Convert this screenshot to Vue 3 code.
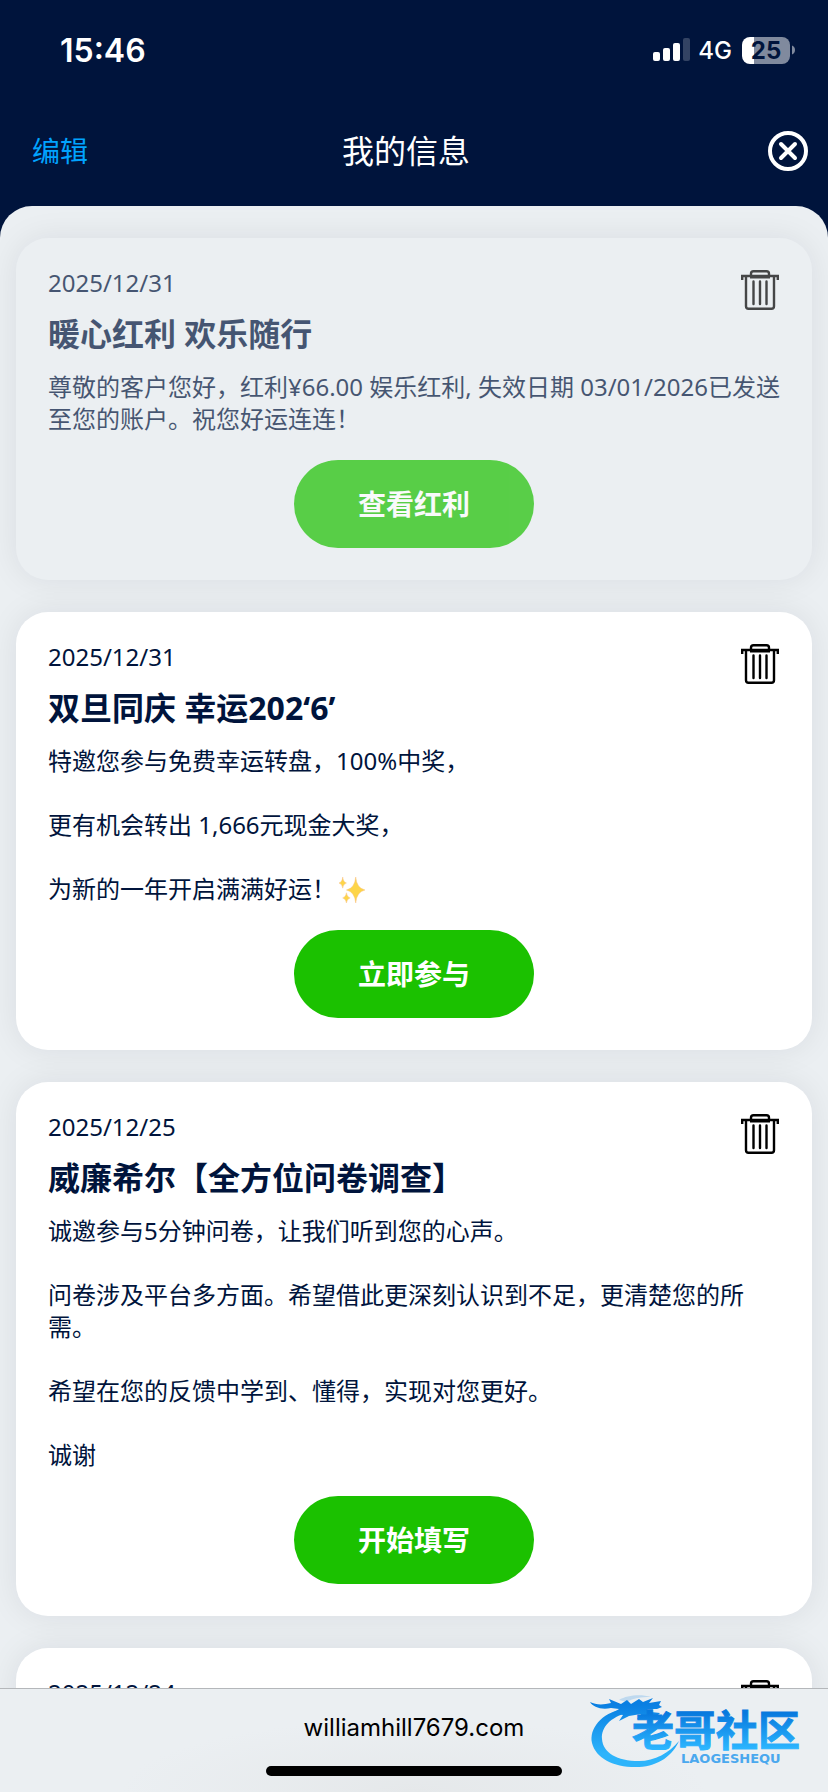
<script setup>
import { ref } from 'vue'

const messages = ref([
  {
    id: 1,
    date: '2025/12/31',
    title: '暖心红利 欢乐随行',
    body: '尊敬的客户您好，红利¥66.00 娱乐红利, 失效日期 03/01/2026已发送至您的账户。祝您好运连连！',
    action: '查看红利',
    read: true,
  },
  {
    id: 2,
    date: '2025/12/31',
    title: '双旦同庆 幸运202‘6’',
    body: '特邀您参与免费幸运转盘，100%中奖，\n\n更有机会转出 1,666元现金大奖，\n\n为新的一年开启满满好运！',
    sparkle: true,
    action: '立即参与',
  },
  {
    id: 3,
    date: '2025/12/25',
    title: '威廉希尔【全方位问卷调查】',
    body: '诚邀参与5分钟问卷，让我们听到您的心声。\n\n问卷涉及平台多方面。希望借此更深刻认识到不足，更清楚您的所需。\n\n希望在您的反馈中学到、懂得，实现对您更好。\n\n诚谢',
    action: '开始填写',
  },
  { id: 4, date: '2025/12/24' },
])

function remove(id) {
  messages.value = messages.value.filter((m) => m.id !== id)
}
</script>

<template>
  <div class="screen">
    <header class="top">
      <div class="status">
        <span class="time">15:46</span>
        <div class="indicators">
          <svg class="signal" viewBox="0 0 37 24" aria-hidden="true">
            <rect x="0" y="14" width="7" height="9" rx="2" />
            <rect x="10" y="10" width="7" height="13" rx="2" />
            <rect x="20" y="5" width="7" height="18" rx="2" />
            <rect x="30" y="0" width="7" height="23" rx="2" opacity="0.2" />
          </svg>
          <span class="network">4G</span>
          <div class="battery"><span class="level">25</span></div>
          <svg class="tip" viewBox="0 0 3 10" aria-hidden="true"><path d="M0 0.5C4 2 4 8 0 9.5z" /></svg>
        </div>
      </div>
      <nav class="nav">
        <button type="button" class="edit">编辑</button>
        <h1>我的信息</h1>
        <button type="button" class="close" aria-label="关闭">
          <svg viewBox="0 0 40 40" fill="none" stroke="#fff" stroke-width="4" stroke-linecap="round">
            <circle cx="20" cy="20" r="18" />
            <path d="M13 13L27 27M27 13L13 27" />
          </svg>
        </button>
      </nav>
    </header>

    <main class="list">
      <article v-for="m in messages" :key="m.id" class="card" :class="{ read: m.read }">
        <div class="inner">
          <div class="head">
            <div>
              <time class="date">{{ m.date }}</time>
              <h2 v-if="m.title">{{ m.title }}</h2>
            </div>
            <button type="button" class="trash" aria-label="删除" @click="remove(m.id)">
              <svg viewBox="0 0 40 40" fill="none" stroke="#000" stroke-width="2.4">
                <path d="M11 6V3.700Q11 1.200 13.500 1.200H26.500Q29 1.200 29 3.700V6" />
                <path d="M2.200 10V6H37.800V10" />
                <path d="M6 6V36.300Q6 38.800 8.500 38.800H31.500Q34 38.800 34 36.300V6M10 7.200H30" />
                <path d="M13.500 11.500V34M20 11.500V34M26.500 11.500V34" stroke-linecap="round" />
              </svg>
            </button>
          </div>
          <p v-if="m.body" class="body">{{ m.body }}<svg v-if="m.sparkle" class="sparkle" viewBox="0 0 30 28" aria-hidden="true"><g fill="#fdd548" stroke="#f9bf86" stroke-width="0.500"><path d="M19 0Q20 12 29 14Q20 16 19 28Q18 16 9 14Q18 12 19 0z" /><path d="M5 0Q5.500 5.500 9 6.500Q5.500 7.500 5 12Q4.500 7.500 1 6.500Q4.500 5.500 5 0z" /><path d="M9 17Q9.500 21.500 13 22.500Q9.500 23.500 9 28Q8.500 23.500 5 22.500Q8.500 21.500 9 17z" /></g></svg></p>
          <button v-if="m.action" type="button" class="action">{{ m.action }}</button>
        </div>
      </article>
    </main>

    <footer class="bar">
      <a class="url" href="#">williamhill7679.com</a>
      <div class="home"></div>
      <svg class="mark" viewBox="0 0 226 76" role="img" aria-label="老哥社区">
        <defs>
          <linearGradient id="blue" x1="0" y1="0" x2="0" y2="76" gradientUnits="userSpaceOnUse">
            <stop offset="0.15" stop-color="#0a7fe2" />
            <stop offset="0.8" stop-color="#2db4fb" />
          </linearGradient>
          <linearGradient id="label" x1="0" y1="20" x2="0" y2="56" gradientUnits="userSpaceOnUse">
            <stop offset="0" stop-color="#0879de" />
            <stop offset="1" stop-color="#2cb6ff" />
          </linearGradient>
        </defs>
        <g fill="url(#blue)">
          <path d="M34 16C12 20 0 36 3 50C7 66 26 75 50 74C70 73 84 62 90 48C80 60 66 68 50 68C28 68 14 60 13 46C12 34 22 24 38 20z" />
          <path d="M1 9C7 12 14 12 22 10L20 6L32 11L38 7L42 11L50 6L54 9L64 5L60 10L72 8L70 12L73 14L68 16H58L62 19L71 20L66 25L56 23L48 26L52 21L40 23L30 28L34 22L24 20L30 16L22 15C12 17 4 14 1 9z" />
          <path d="M30 7C38 2 52 1 62 4C52 4 44 5 38 9z" opacity="0.200" />
        </g>
        <text class="mark-name" x="43" y="53" fill="url(#label)" stroke="url(#label)">老哥社区</text>
        <text class="mark-sub" x="92" y="70">LAOGESHEQU</text>
      </svg>
    </footer>
  </div>
</template>

<style>
body {
  background: #00143c;
}
</style>

<style scoped>
.screen {
  display: flex;
  flex-direction: column;
  height: 100vh;
  background: #00143c;
  color: #00143c;
  font-family: "Noto Sans", "Noto Sans CJK SC", sans-serif;
}

button {
  padding: 0;
  border: 0;
  background: none;
  font-family: inherit;
  cursor: pointer;
}

svg {
  display: block;
}

.top {
  flex: none;
  color: #fff;
}

.status {
  display: flex;
  align-items: center;
  justify-content: space-between;
  height: 100px;
  padding: 0 33px 0 60px;
  font-family: Inter, sans-serif;
}

.time {
  font-size: 32px;
  font-weight: 600;
}

.indicators {
  display: flex;
  align-items: center;
}

.signal {
  width: 37px;
  height: 24px;
  fill: #fff;
}

.network {
  margin: 0 10px 0 8px;
  font-size: 24px;
  font-weight: 500;
}

.battery {
  width: 48px;
  height: 27px;
  border-radius: 8px;
  background: linear-gradient(90deg, #fff 25%, #808a9e 25%);
  color: #00143c;
  text-align: center;
}

.level {
  font-size: 24px;
  line-height: 27px;
  font-weight: 700;
}

.tip {
  width: 3px;
  height: 10px;
  margin-left: 2px;
  fill: #808a9e;
}

.nav {
  display: grid;
  grid-template-columns: 1fr auto 1fr;
  align-items: center;
  box-sizing: border-box;
  height: 106px;
  padding: 0 20px 4px 32px;
}

.edit {
  justify-self: start;
  color: #00a3ff;
  font-size: 28px;
  line-height: 40px;
}

h1 {
  margin: 0;
  padding-right: 28px;
  font-size: 32px;
  line-height: 44px;
  font-weight: 400;
}

.close {
  justify-self: end;
}

.close svg {
  width: 40px;
  height: 40px;
}

.list {
  flex: 1;
  min-height: 0;
  display: flex;
  flex-direction: column;
  gap: 32px;
  padding: 32px 16px;
  overflow-y: auto;
  scrollbar-width: none;
  border-radius: 32px 32px 0 0;
  background: #ebeff2;
}

.card {
  flex: none;
  padding: 32px;
  border-radius: 32px;
  background: #fff;
  box-shadow: 0 0 32px rgba(0, 20, 40, 0.08);
}

.card.read {
  background: #ebeff2;
}

.read .inner {
  opacity: 0.7;
}

.head {
  display: flex;
  justify-content: space-between;
  align-items: flex-start;
}

.date {
  display: block;
  font-size: 24px;
  line-height: 26px;
}

h2 {
  margin: 18px 0 17px;
  font-size: 32px;
  line-height: 40px;
  font-weight: 700;
}

.trash svg {
  width: 40px;
  height: 40px;
}

.body {
  margin: 0 0 25px;
  font-size: 24px;
  line-height: 32px;
  white-space: pre-line;
}

.sparkle {
  display: inline-block;
  width: 28px;
  height: 26px;
  margin-left: 2px;
  vertical-align: -5px;
}

.action {
  display: block;
  min-width: 240px;
  height: 88px;
  margin: 0 auto;
  padding-bottom: 2px;
  border-radius: 44px;
  background: #1bc100;
  color: #fff;
  font-size: 28px;
  font-weight: 700;
}

.bar {
  position: relative;
  flex: none;
  display: flex;
  flex-direction: column;
  align-items: center;
  justify-content: space-between;
  padding: 23px 0 16px;
  border-top: 1px solid #b4b7ba;
  background: radial-gradient(ellipse at 50% 100%, #e5e8ea, #ebeff2 50%);
}

.url {
  color: #000;
  font-family: Inter, sans-serif;
  font-size: 24px;
  line-height: 32px;
  text-decoration: none;
}

.home {
  width: 296px;
  height: 10px;
  margin-top: 22px;
  border-radius: 5px;
  background: #000;
}

.mark {
  position: absolute;
  right: 13px;
  top: 4px;
  width: 226px;
  height: 76px;
}

.mark-name {
  font-family: "Noto Sans CJK SC", sans-serif;
  font-size: 42px;
  font-weight: 700;
  stroke-width: 1px;
}

.mark-sub {
  fill: #4aa8ee;
  font-family: "DejaVu Sans", sans-serif;
  font-size: 13px;
  font-weight: 700;
}
</style>
